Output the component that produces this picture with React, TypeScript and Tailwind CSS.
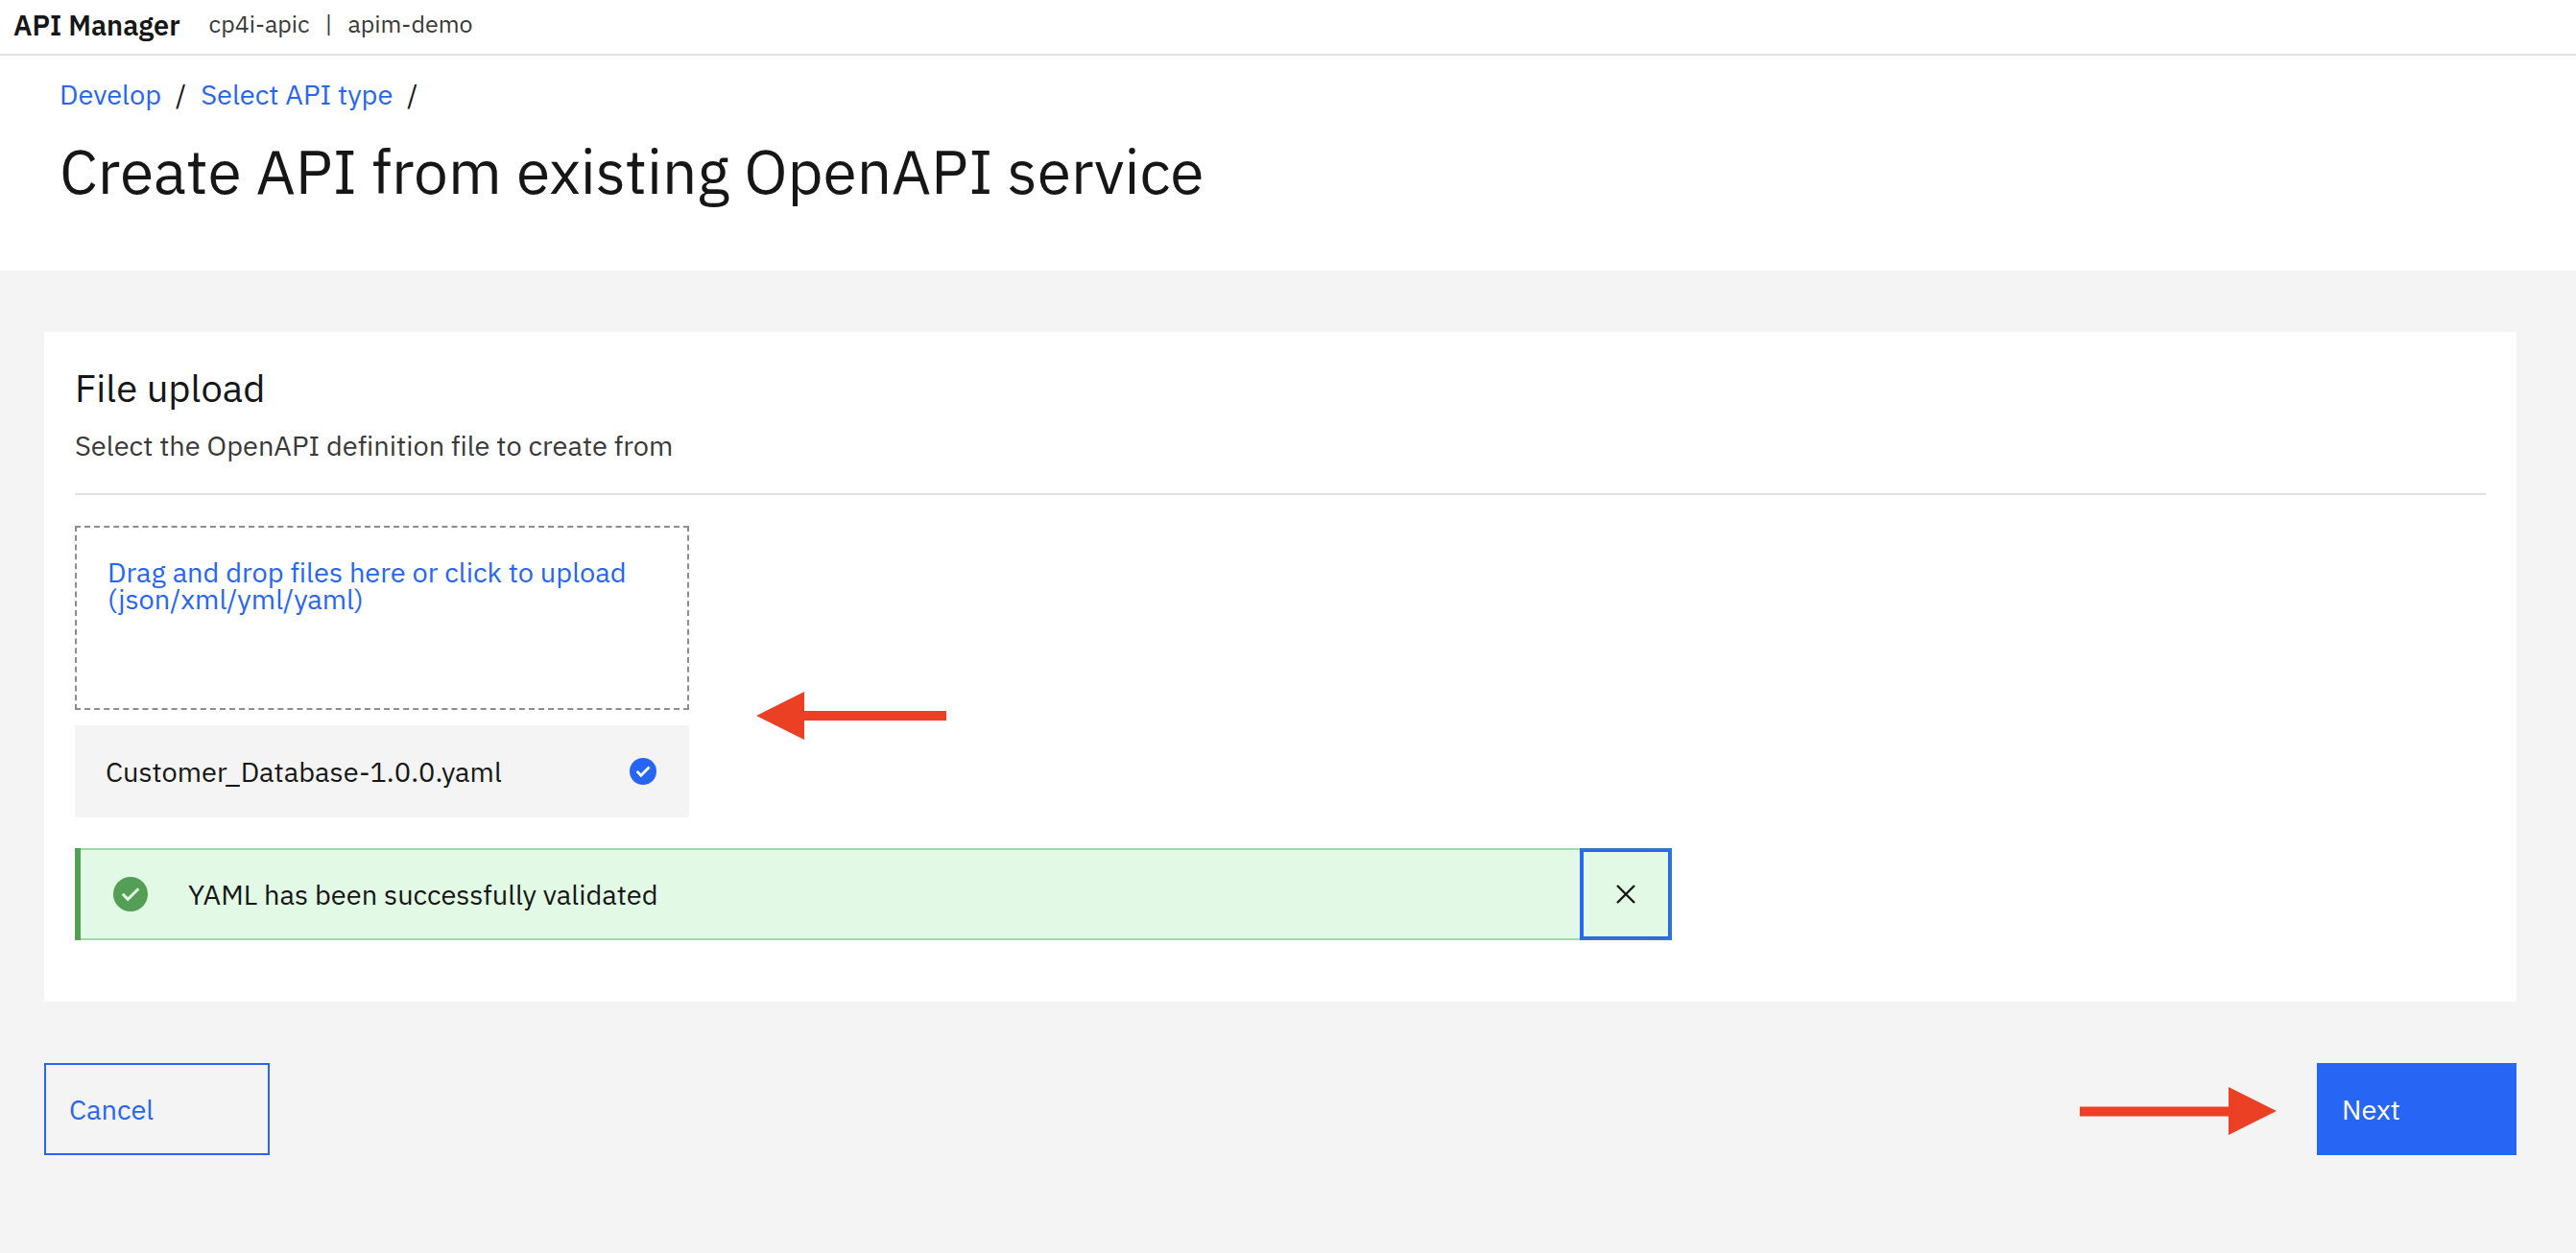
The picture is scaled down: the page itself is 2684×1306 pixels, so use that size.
import { useState } from "react";

function CheckBadge({ className }: { className: string }) {
  return (
    <svg viewBox="0 0 36 36" className={className} aria-hidden="true">
      <circle cx="18" cy="18" r="18" stroke="none" />
      <path d="M9.8 17.8L15.2 23.4L26.4 12.2" fill="none" />
    </svg>
  );
}

function ArrowLeft() {
  return (
    <svg viewBox="0 0 198 50" className="mb-[81px] h-[50px] w-[198px]" aria-hidden="true">
      <path d="M0 25L50 0V20H198V30H50V50Z" fill="#ec4025" />
    </svg>
  );
}

function ArrowRight() {
  return (
    <svg viewBox="0 0 205 50" className="mt-[3px] mr-[42px] ml-auto h-[50px] w-[205px]" aria-hidden="true">
      <path d="M205 25L155 0V20.5H0V30.5H155V50Z" fill="#ec4025" />
    </svg>
  );
}

export default function App() {
  const [showNotice, setShowNotice] = useState(true);

  return (
    <div className="flex min-h-screen flex-col bg-[#f4f4f4] font-['IBM_Plex_Sans',Roboto,sans-serif] text-[29px] leading-9 text-[#161616] [font-variant-ligatures:none]">
      <header className="flex h-[58px] items-center border-b-2 border-[#e0e0e0] bg-white px-[14px] pb-1">
        <span className="font-semibold">API Manager</span>
        <span className="ml-[30px] flex gap-4 pb-[2px] text-[25px] text-[#393939]">
          <span>cp4i-apic</span>
          <span>|</span>
          <span>apim-demo</span>
        </span>
      </header>

      <div className="bg-white px-[62px] pt-[22px] pb-16">
        <nav aria-label="Breadcrumb" className="flex gap-[15px]">
          <a href="#develop" className="text-[#2765f5]">Develop</a>
          <span>/</span>
          <a href="#select" className="text-[#2765f5]">Select API type</a>
          <span>/</span>
        </nav>
        <h1 className="mt-[22px] text-[64px] leading-20">Create API from existing OpenAPI service</h1>
      </div>

      <main className="pt-16 pr-[62px] pb-[102px] pl-[46px]">
        <section className="bg-white px-8 pt-8 pb-16">
          <h2 className="text-[40px] leading-[52px]">File upload</h2>
          <p className="mt-4 border-b-2 border-[#e0e0e0] pb-8 text-[#393939]">
            Select the OpenAPI definition file to create from
          </p>

          <div className="mt-8 flex items-end gap-[70px]">
            <div className="flex w-[640px] flex-col gap-4">
              <label className="block h-48 cursor-pointer border-2 border-dashed border-[#8d8d8d] px-8 pt-8 leading-7 text-[#2765f5]">
                Drag and drop files here or click to upload (json/xml/yml/yaml)
                <input type="file" accept=".json,.xml,.yml,.yaml" className="sr-only" />
              </label>
              <div className="flex h-24 items-center justify-between bg-[#f4f4f4] px-8">
                <span>Customer_Database-1.0.0.yaml</span>
                <CheckBadge className="mr-[2px] size-7 fill-[#2765f5] stroke-white stroke-[3.5]" />
              </div>
            </div>
            <ArrowLeft />
          </div>

          {showNotice && (
            <div
              role="status"
              className="mt-8 flex h-24 w-[1664px] items-center border-l-6 border-[#529f55] bg-[#e2fae5]"
            >
              <div className="flex h-full flex-1 items-center border-y-2 border-[#a3d6aa] pl-[34px]">
                <CheckBadge className="size-9 fill-[#529f55] stroke-[#e2fae5] stroke-3" />
                <span className="ml-[42px]">YAML has been successfully validated</span>
              </div>
              <button
                type="button"
                aria-label="Close notification"
                onClick={() => setShowNotice(false)}
                className="flex size-24 items-center justify-center border-2 border-[#377bb5] border-l-[#2765f5] shadow-[inset_0_0_0_2px_#2765f5]"
              >
                <svg viewBox="0 0 20 20" className="size-5" aria-hidden="true">
                  <path d="M1 1L19 19M19 1L1 19" stroke="#161616" strokeWidth="2.4" />
                </svg>
              </button>
            </div>
          )}
        </section>

        <div className="mt-16 flex items-center">
          <button
            type="button"
            className="h-24 w-[235px] border-2 border-[#2765f5] px-6 text-left text-[#2765f5]"
          >
            Cancel
          </button>
          <ArrowRight />
          <button type="button" className="h-24 w-52 bg-[#2765f5] px-[26px] text-left text-white">
            Next
          </button>
        </div>
      </main>
    </div>
  );
}
